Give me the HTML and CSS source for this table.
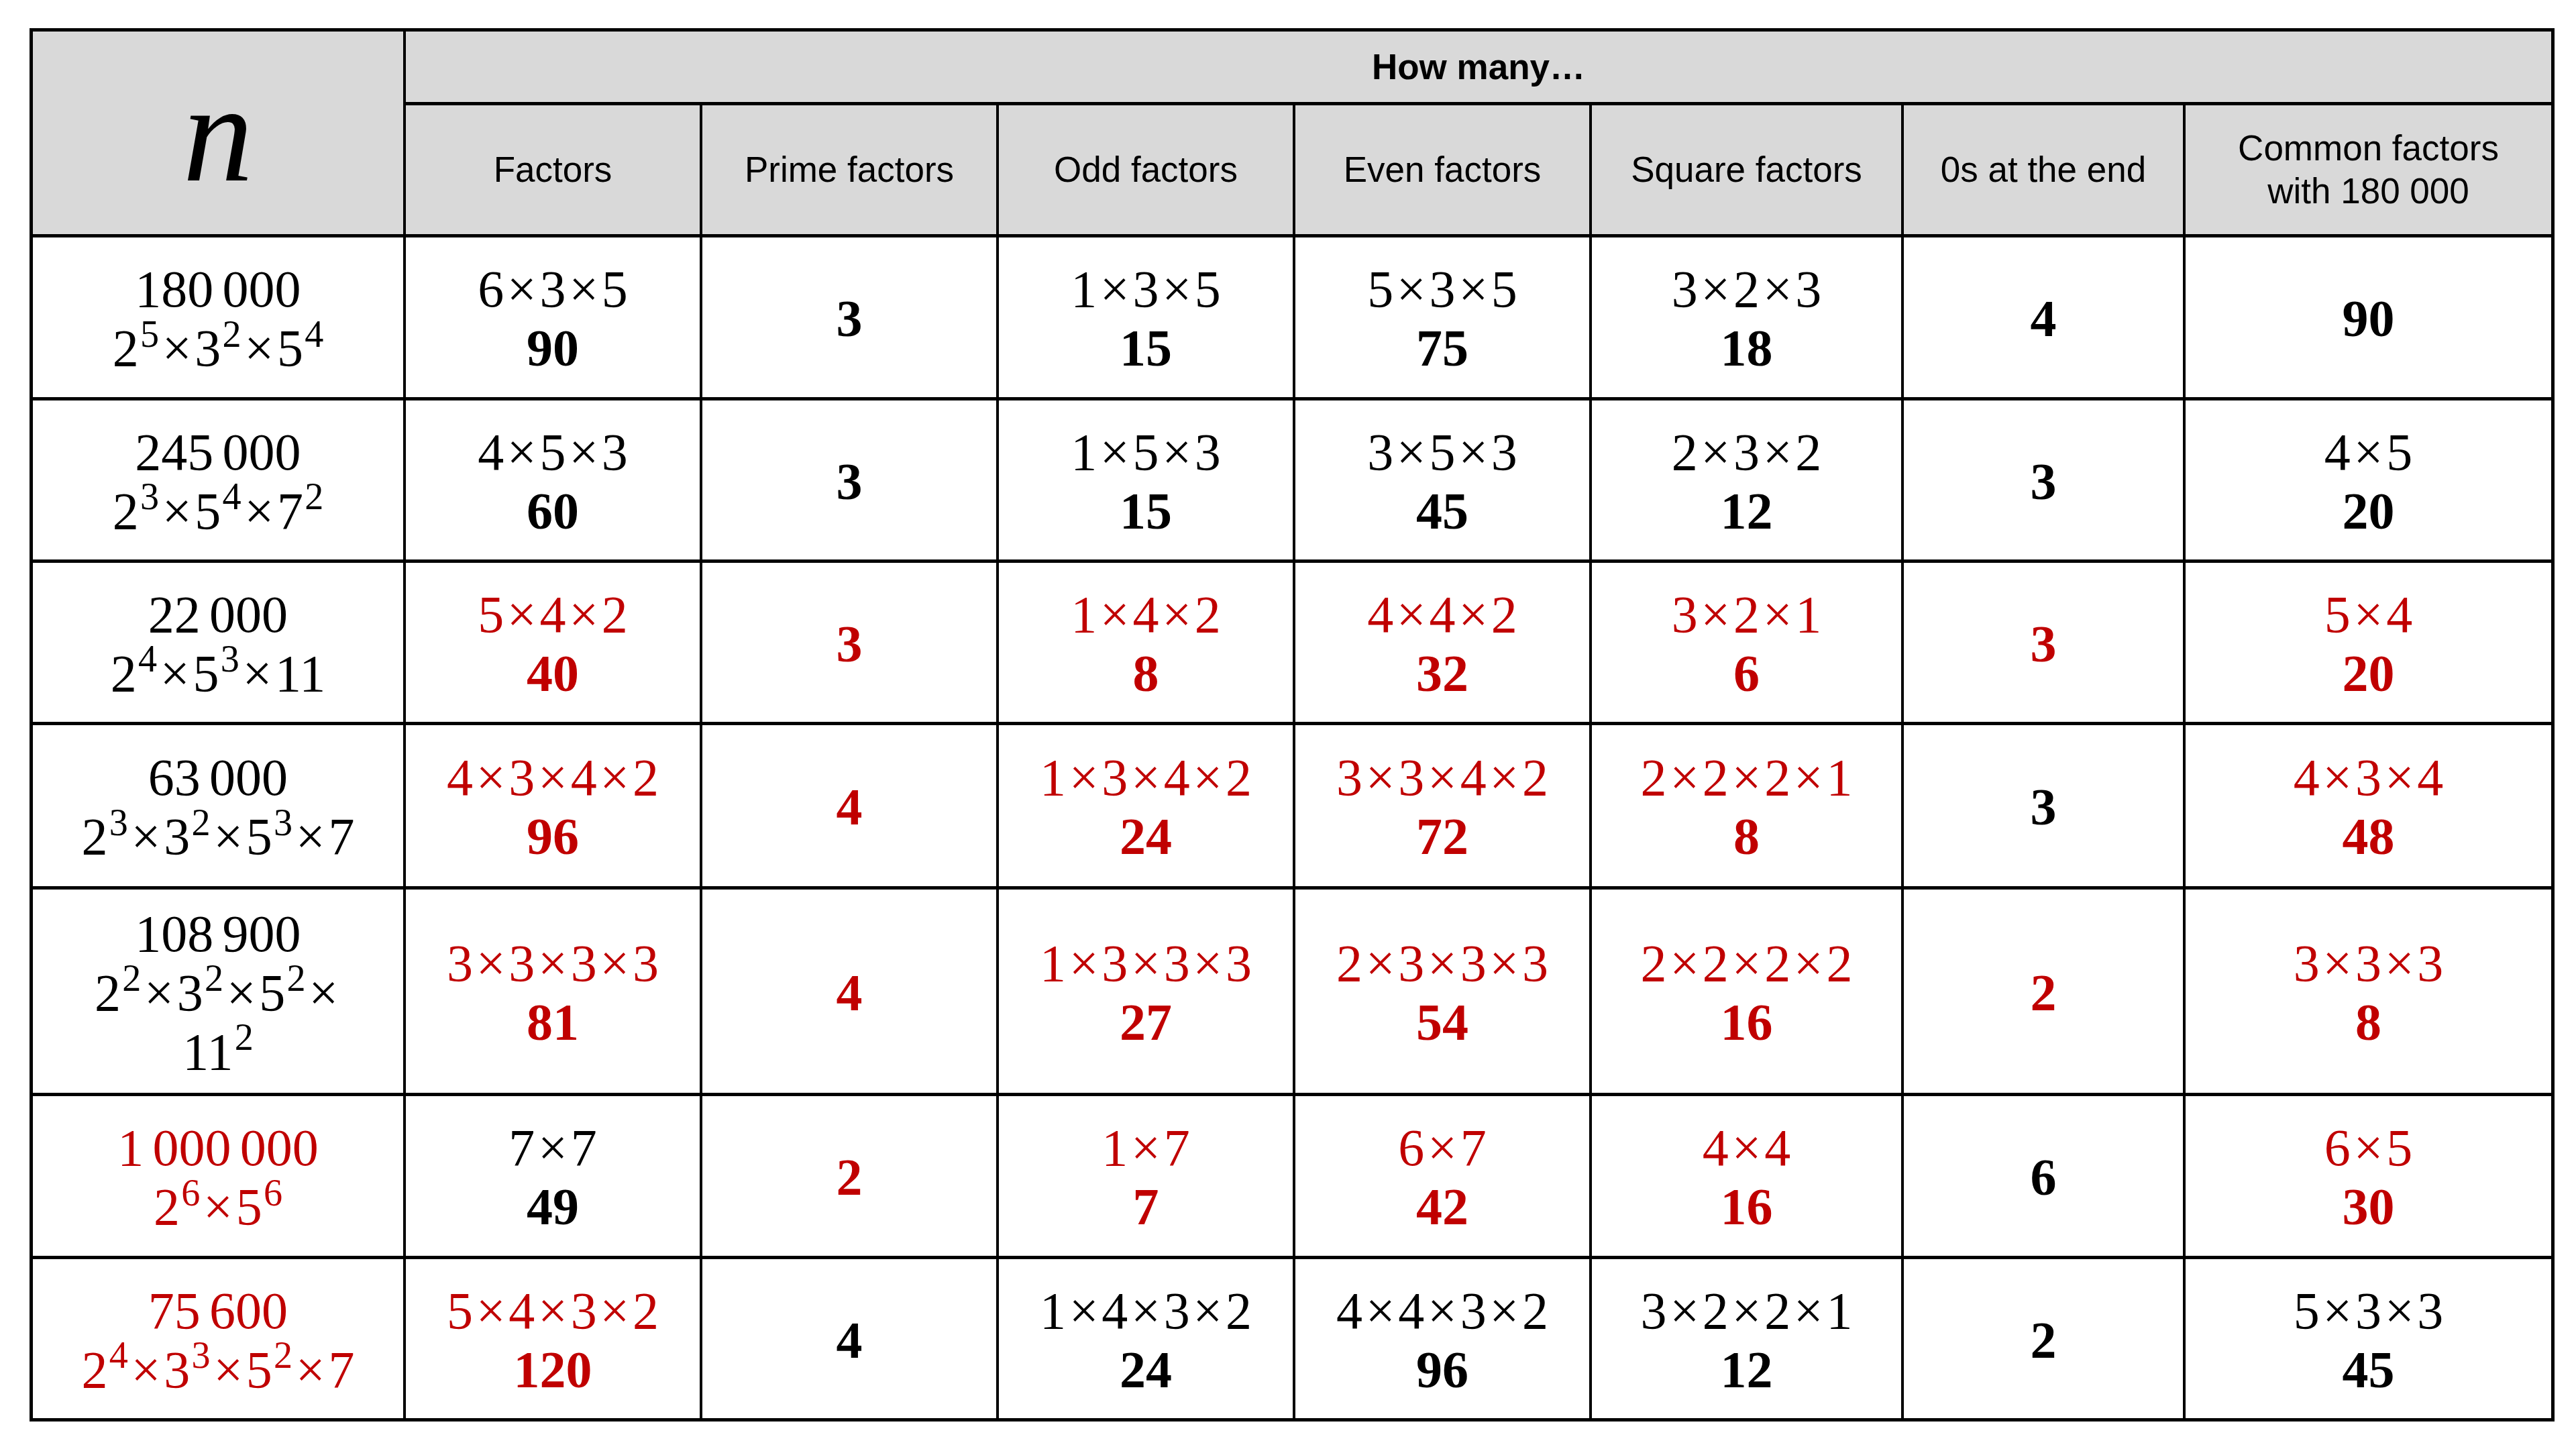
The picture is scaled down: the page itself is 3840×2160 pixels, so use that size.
FILE: index.html
```html
<!DOCTYPE html>
<html lang="en">
<head>
<meta charset="utf-8">
<title>How many factors</title>
<link rel="stylesheet" href="styles.css">
</head>
<body>
<div class="grid">
  <div class="cell head nhead">n</div>
  <div class="cell head howmany">How many…</div>
  <div class="cell head">Factors</div>
  <div class="cell head">Prime factors</div>
  <div class="cell head">Odd factors</div>
  <div class="cell head">Even factors</div>
  <div class="cell head">Square factors</div>
  <div class="cell head">0s at the end</div>
  <div class="cell head">Common factors<br>with 180 000</div>

  <!-- row 1 -->
  <div class="cell"><span class="num">180 000</span><span>2<sup>5</sup><i class="x">×</i>3<sup>2</sup><i class="x">×</i>5<sup>4</sup></span></div>
  <div class="cell"><span>6<i class="x">×</i>3<i class="x">×</i>5</span><b>90</b></div>
  <div class="cell"><b>3</b></div>
  <div class="cell"><span>1<i class="x">×</i>3<i class="x">×</i>5</span><b>15</b></div>
  <div class="cell"><span>5<i class="x">×</i>3<i class="x">×</i>5</span><b>75</b></div>
  <div class="cell"><span>3<i class="x">×</i>2<i class="x">×</i>3</span><b>18</b></div>
  <div class="cell"><b>4</b></div>
  <div class="cell"><b>90</b></div>

  <!-- row 2 -->
  <div class="cell"><span class="num">245 000</span><span>2<sup>3</sup><i class="x">×</i>5<sup>4</sup><i class="x">×</i>7<sup>2</sup></span></div>
  <div class="cell"><span>4<i class="x">×</i>5<i class="x">×</i>3</span><b>60</b></div>
  <div class="cell"><b>3</b></div>
  <div class="cell"><span>1<i class="x">×</i>5<i class="x">×</i>3</span><b>15</b></div>
  <div class="cell"><span>3<i class="x">×</i>5<i class="x">×</i>3</span><b>45</b></div>
  <div class="cell"><span>2<i class="x">×</i>3<i class="x">×</i>2</span><b>12</b></div>
  <div class="cell"><b>3</b></div>
  <div class="cell"><span>4<i class="x">×</i>5</span><b>20</b></div>

  <!-- row 3 -->
  <div class="cell"><span class="num">22 000</span><span>2<sup>4</sup><i class="x">×</i>5<sup>3</sup><i class="x">×</i>11</span></div>
  <div class="cell red"><span>5<i class="x">×</i>4<i class="x">×</i>2</span><b>40</b></div>
  <div class="cell red"><b>3</b></div>
  <div class="cell red"><span>1<i class="x">×</i>4<i class="x">×</i>2</span><b>8</b></div>
  <div class="cell red"><span>4<i class="x">×</i>4<i class="x">×</i>2</span><b>32</b></div>
  <div class="cell red"><span>3<i class="x">×</i>2<i class="x">×</i>1</span><b>6</b></div>
  <div class="cell red"><b>3</b></div>
  <div class="cell red"><span>5<i class="x">×</i>4</span><b>20</b></div>

  <!-- row 4 -->
  <div class="cell"><span class="num">63 000</span><span>2<sup>3</sup><i class="x">×</i>3<sup>2</sup><i class="x">×</i>5<sup>3</sup><i class="x">×</i>7</span></div>
  <div class="cell red"><span>4<i class="x">×</i>3<i class="x">×</i>4<i class="x">×</i>2</span><b>96</b></div>
  <div class="cell red"><b>4</b></div>
  <div class="cell red"><span>1<i class="x">×</i>3<i class="x">×</i>4<i class="x">×</i>2</span><b>24</b></div>
  <div class="cell red"><span>3<i class="x">×</i>3<i class="x">×</i>4<i class="x">×</i>2</span><b>72</b></div>
  <div class="cell red"><span>2<i class="x">×</i>2<i class="x">×</i>2<i class="x">×</i>1</span><b>8</b></div>
  <div class="cell"><b>3</b></div>
  <div class="cell red"><span>4<i class="x">×</i>3<i class="x">×</i>4</span><b>48</b></div>

  <!-- row 5 -->
  <div class="cell"><span class="num">108 900</span><span>2<sup>2</sup><i class="x">×</i>3<sup>2</sup><i class="x">×</i>5<sup>2</sup><i class="x">×</i></span><span>11<sup>2</sup></span></div>
  <div class="cell red"><span>3<i class="x">×</i>3<i class="x">×</i>3<i class="x">×</i>3</span><b>81</b></div>
  <div class="cell red"><b>4</b></div>
  <div class="cell red"><span>1<i class="x">×</i>3<i class="x">×</i>3<i class="x">×</i>3</span><b>27</b></div>
  <div class="cell red"><span>2<i class="x">×</i>3<i class="x">×</i>3<i class="x">×</i>3</span><b>54</b></div>
  <div class="cell red"><span>2<i class="x">×</i>2<i class="x">×</i>2<i class="x">×</i>2</span><b>16</b></div>
  <div class="cell red"><b>2</b></div>
  <div class="cell red"><span>3<i class="x">×</i>3<i class="x">×</i>3</span><b>8</b></div>

  <!-- row 6 -->
  <div class="cell red"><span class="num">1 000 000</span><span>2<sup>6</sup><i class="x">×</i>5<sup>6</sup></span></div>
  <div class="cell"><span>7<i class="x">×</i>7</span><b>49</b></div>
  <div class="cell red"><b>2</b></div>
  <div class="cell red"><span>1<i class="x">×</i>7</span><b>7</b></div>
  <div class="cell red"><span>6<i class="x">×</i>7</span><b>42</b></div>
  <div class="cell red"><span>4<i class="x">×</i>4</span><b>16</b></div>
  <div class="cell"><b>6</b></div>
  <div class="cell red"><span>6<i class="x">×</i>5</span><b>30</b></div>

  <!-- row 7 -->
  <div class="cell red"><span class="num">75 600</span><span>2<sup>4</sup><i class="x">×</i>3<sup>3</sup><i class="x">×</i>5<sup>2</sup><i class="x">×</i>7</span></div>
  <div class="cell red"><span>5<i class="x">×</i>4<i class="x">×</i>3<i class="x">×</i>2</span><b>120</b></div>
  <div class="cell"><b>4</b></div>
  <div class="cell"><span>1<i class="x">×</i>4<i class="x">×</i>3<i class="x">×</i>2</span><b>24</b></div>
  <div class="cell"><span>4<i class="x">×</i>4<i class="x">×</i>3<i class="x">×</i>2</span><b>96</b></div>
  <div class="cell"><span>3<i class="x">×</i>2<i class="x">×</i>2<i class="x">×</i>1</span><b>12</b></div>
  <div class="cell"><b>2</b></div>
  <div class="cell"><span>5<i class="x">×</i>3<i class="x">×</i>3</span><b>45</b></div>
</div>
</body>
</html>
```

FILE: styles.css
```css
html, body {
  margin: 0;
  padding: 0;
  background: #ffffff;
}

.grid {
  display: grid;
  width: max-content;
  margin: 42px 0 0 44px;
  padding: 5px;
  gap: 5px 4px;
  background: #000000;
  grid-template-columns: 552px 438px 438px 438px 438px 461px 416px 545px;
  grid-template-rows: 105px 192px 238px 237px 237px 240px 303px 238px 237px;
}

.cell {
  background: #ffffff;
  display: flex;
  flex-direction: column;
  align-items: center;
  justify-content: center;
  text-align: center;
  font-family: "Liberation Serif", "Times New Roman", serif;
  font-size: 78px;
  line-height: 88px;
  color: #000000;
  padding-top: 4px;
  box-sizing: border-box;
}

.cell span,
.cell b {
  display: block;
  white-space: nowrap;
}

.cell b {
  font-weight: bold;
}

.num {
  word-spacing: -0.08em;
}

.x {
  font-style: normal;
  margin: 0 0.06em;
}

sup {
  font-size: 0.72em;
  line-height: 0;
  vertical-align: 0.5em;
  margin-left: 0.04em;
}

.red {
  color: #c00000;
}

.head {
  background: #d9d9d9;
  font-family: "Liberation Sans", Arial, sans-serif;
  font-size: 53px;
  line-height: 64px;
  padding-top: 0;
}

.nhead {
  grid-row: span 2;
  font-family: "Liberation Serif", "Times New Roman", serif;
  font-style: italic;
  font-size: 210px;
  line-height: normal;
}

.howmany {
  grid-column: span 7;
  font-weight: bold;
}
```
